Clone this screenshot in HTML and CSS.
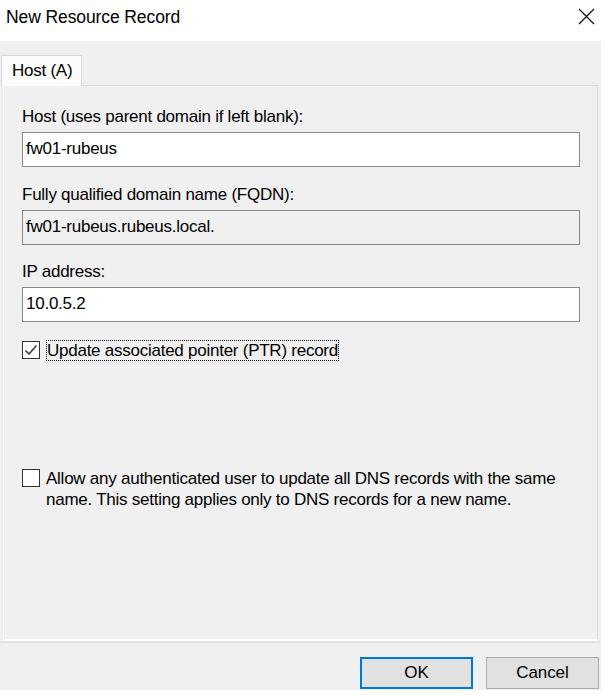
FILE: index.html
```html
<!DOCTYPE html>
<html>
<head>
<meta charset="utf-8">
<link rel="stylesheet" href="styles.css">
</head>
<body>
<div class="dialog">
  <div class="titlebar">
    <span class="title">New Resource Record</span>
    <svg class="close" width="17" height="17" viewBox="0 0 17 17"><path d="M1 1L16 16M16 1L1 16" stroke="#111" stroke-width="1.3" fill="none"/></svg>
  </div>
  <div class="content">
    <div class="tabs"><div class="tab">Host (A)</div></div>
    <div class="panel">
      <div class="label">Host (uses parent domain if left blank):</div>
      <div class="field">fw01-rubeus</div>
      <div class="label">Fully qualified domain name (FQDN):</div>
      <div class="field disabled">fw01-rubeus.rubeus.local.</div>
      <div class="label">IP address:</div>
      <div class="field">10.0.5.2</div>
      <div class="check first">
        <span class="box"><svg width="16" height="16" viewBox="0 0 16 16"><path d="M2.5 8.5L6 12L13.5 3.5" stroke="#444" stroke-width="1.7" fill="none"/></svg></span>
        <span class="ctext focus">Update associated pointer (PTR) record</span>
      </div>
      <div class="check second">
        <span class="box"></span>
        <span class="ctext">Allow any authenticated user to update all DNS records with the same name. This setting applies only to DNS records for a new name.</span>
      </div>
    </div>
    <div class="footer">
      <button class="btn default">OK</button>
      <button class="btn">Cancel</button>
    </div>
  </div>
</div>
</body>
</html>
```
FILE: styles.css
```css
html, body {
  margin: 0;
  padding: 0;
  background: #ffffff;
}
body {
  font-family: "Liberation Sans", Arial, sans-serif;
  font-size: 17px;
  color: #000;
  letter-spacing: -0.25px;
}
.dialog {
  width: 601px;
  height: 690px;
  display: flex;
  flex-direction: column;
}
.titlebar {
  height: 41px;
  background: #fff;
  display: flex;
  align-items: center;
  justify-content: space-between;
  padding: 0 6px 0 6px;
  box-sizing: border-box;
}
.title {
  font-size: 17.5px;
  letter-spacing: -0.1px;
  margin-top: -6px;
}
.close {
  margin-top: -8px;
}
.content {
  flex: 1;
  background: #f0f0f0;
  display: flex;
  flex-direction: column;
  padding-top: 13px;
}
.tabs {
  height: 31px;
  display: flex;
  align-items: flex-end;
  padding-left: 1px;
}
.tab {
  height: 31px;
  width: 81px;
  box-sizing: border-box;
  background: #fcfcfc;
  border: 1px solid #d9d9d9;
  border-bottom: none;
  padding: 5px 0 0 10px;
  position: relative;
  z-index: 1;
  margin-bottom: -1px;
}
.panel {
  margin-left: 3px;
  width: 595px;
  height: 556px;
  box-sizing: border-box;
  border: 1px solid #dadada;
  border-left-color: #fff;
  border-bottom: 2px solid #fff;
  background: #f0f0f0;
  padding: 20px 18px 0 18px;
  display: flex;
  flex-direction: column;
}
.label {
  height: 22px;
  line-height: 22px;
  margin-bottom: 4px;
}
.field {
  width: 558px;
  height: 35px;
  box-sizing: border-box;
  border: 1.5px solid #8a8a8a;
  background: #fff;
  line-height: 32px;
  padding-left: 3px;
  margin-bottom: 17px;
}
.field.disabled {
  background: #f0f0f0;
  height: 35px;
  margin-bottom: 16px;
}
.check {
  display: flex;
  align-items: flex-start;
  gap: 6px;
}
.check.first {
  margin-top: 1px;
}
.check.second {
  margin-top: 107px;
}
.box {
  width: 18px;
  height: 18px;
  box-sizing: border-box;
  border: 1.5px solid #333;
  background: #fff;
  display: flex;
  align-items: center;
  justify-content: center;
  flex: none;
  margin-top: 1px;
}
.ctext {
  line-height: 21px;
  width: 522px;
}
.ctext.focus {
  width: auto;
  outline: 1px dotted #000;
  outline-offset: -1px;
  padding: 0 1px;
}
.footer {
  flex: 1;
  border-top: 2px solid #e2e2e2;
  display: flex;
  justify-content: flex-end;
  align-items: flex-start;
  padding: 14px 2px 0 0;
  gap: 13px;
}
.btn {
  width: 113px;
  height: 32px;
  box-sizing: border-box;
  background: #e1e1e1;
  border: 1.5px solid #adadad;
  font-family: "Liberation Sans", Arial, sans-serif;
  font-size: 17px;
  letter-spacing: -0.1px;
  color: #000;
  padding: 0;
}
.btn.default {
  border: 2px solid #0078d7;
}
```
